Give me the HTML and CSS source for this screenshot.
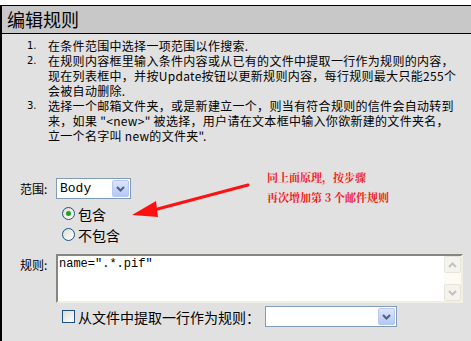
FILE: index.html
```html
<!DOCTYPE html>
<html>
<head>
<meta charset="utf-8">
<link rel="stylesheet" href="styles.css">
</head>
<body>
<div class="panel">
  <div class="title">编辑规则</div>
  <div class="content">
    <ol class="steps">
      <li><span class="num">1.</span><span class="txt">在条件范围中选择一项范围以作搜索.</span></li>
      <li><span class="num">2.</span><span class="txt">在规则内容框里输入条件内容或从已有的文件中提取一行作为规则的内容，<br>现在列表框中，并按Update按钮以更新规则内容，每行规则最大只能255个<br>会被自动删除.</span></li>
      <li><span class="num">3.</span><span class="txt">选择一个邮箱文件夹，或是新建立一个，则当有符合规则的信件会自动转到<br>来，如果 "&lt;new&gt;" 被选择，用户请在文本框中输入你欲新建的文件夹名，<br>立一个名字叫 new的文件夹".</span></li>
    </ol>
    <div class="row range">
      <span class="label">范围:</span>
      <div class="select small"><span class="val">Body</span><span class="btn"><svg width="9" height="6" viewBox="0 0 9 6"><path d="M1 1 L4.5 4.5 L8 1" fill="none" stroke="#4d6185" stroke-width="2"/></svg></span></div>
    </div>
    <div class="radios">
      <label class="radio"><span class="dot on"></span>包含</label>
      <label class="radio"><span class="dot"></span>不包含</label>
    </div>
    <div class="row rule">
      <span class="label">规则:</span>
      <div class="textarea">
        <span class="code">name=".*.pif"</span>
        <div class="scroll">
          <span class="sbtn"><svg width="9" height="6" viewBox="0 0 9 6"><path d="M1 5 L4.5 1.5 L8 5" fill="none" stroke="#c3c3bd" stroke-width="2"/></svg></span>
          <span class="sbtn"><svg width="9" height="6" viewBox="0 0 9 6"><path d="M1 1 L4.5 4.5 L8 1" fill="none" stroke="#c3c3bd" stroke-width="2"/></svg></span>
        </div>
      </div>
    </div>
    <div class="row extract">
      <span class="check"></span>
      <span class="ctext">从文件中提取一行作为规则：</span>
      <div class="select wide"><span class="val"></span><span class="btn"><svg width="9" height="6" viewBox="0 0 9 6"><path d="M1 1 L4.5 4.5 L8 1" fill="none" stroke="#4d6185" stroke-width="2"/></svg></span></div>
    </div>
  </div>
  <div class="note">
    <div>同上面原理，按步骤</div>
    <div>再次增加第 3 个邮件规则</div>
  </div>
  <svg class="arrow" width="130" height="40" viewBox="0 0 130 40">
    <path d="M118 4 L20 30" stroke="#ff1010" stroke-width="3" stroke-linecap="round"/>
    <path d="M2 34 L26 20 L28 36 Z" fill="#ff1010"/>
  </svg>
</div>
</body>
</html>
```
FILE: styles.css
```css
html, body {
  margin: 0;
  padding: 0;
  background: #ffffff;
  overflow: hidden;
}
body {
  width: 471px;
  height: 341px;
  padding-top: 5px;
  box-sizing: border-box;
  font-family: "Noto Sans CJK SC", "DejaVu Sans", sans-serif;
  color: #000;
}
.panel {
  position: relative;
  width: 700px;
  height: 336px;
  border-top: 1px solid #000;
  border-left: 2px solid #000;
  background: #e1e1e1;
}
.title {
  height: 27px;
  background: #c8c8c8;
  border-bottom: 1px solid #000;
  font-size: 18px;
  line-height: 27px;
  padding-left: 5px;
  color: #000;
}
.content {
  padding-top: 4px;
}
.steps {
  list-style: none;
  margin: 0;
  padding: 0;
  font-size: 12px;
  line-height: 15px;
  white-space: nowrap;
}
.steps li {
  display: flex;
}
.num {
  width: 21px;
  padding-left: 25px;
  font-size: 10px;
  font-family: "DejaVu Sans", sans-serif;
}
.txt {
  display: block;
  letter-spacing: 0.3px;
}
.row {
  display: flex;
  align-items: center;
}
.label {
  width: 36px;
  padding-left: 18px;
  font-size: 12px;
}
.range {
  margin-top: 35px;
  height: 21px;
}
.select {
  display: flex;
  height: 21px;
  box-sizing: border-box;
  border: 1px solid #7f9db9;
  background: #fff;
}
.select.small { width: 75px; }
.select.wide { width: 132px; margin-left: 5px; }
.select .val {
  flex: 1;
  font-family: "Liberation Mono", monospace;
  font-size: 13px;
  line-height: 19px;
  padding-left: 3px;
}
.select .btn {
  width: 15px;
  margin: 1px;
  border: 1px solid #b7c9f0;
  border-radius: 2px;
  background: linear-gradient(#dbe5fb, #b5c8f5);
  display: flex;
  align-items: center;
  justify-content: center;
}
.radios {
  padding-left: 60px;
  padding-top: 4px;
  font-size: 14px;
  line-height: 20px;
}
.radio {
  display: flex;
  align-items: center;
  height: 21px;
}
.dot {
  width: 11px;
  height: 11px;
  border: 1px solid #1c5180;
  border-radius: 50%;
  background: linear-gradient(135deg, #dcdcd5, #fff);
  margin-right: 3px;
  position: relative;
}
.dot.on::after {
  content: "";
  position: absolute;
  left: 3px;
  top: 3px;
  width: 5px;
  height: 5px;
  border-radius: 50%;
  background: #21a121;
}
.rule {
  margin-top: 9px;
  align-items: flex-start;
}
.rule .label { padding-top: 2px; }
.textarea {
  width: 407px;
  height: 49px;
  box-sizing: border-box;
  background: #fff;
  border-top: 2px solid #868680;
  border-left: 2px solid #868680;
  border-right: 2px solid #f1efe2;
  border-bottom: 2px solid #f1efe2;
  display: flex;
  justify-content: space-between;
}
.code {
  font-family: "Liberation Mono", monospace;
  font-size: 12px;
  line-height: 14px;
  padding-left: 1px;
  padding-top: 1px;
}
.scroll {
  width: 17px;
  background: #fcfcf4;
  display: flex;
  flex-direction: column;
  justify-content: space-between;
}
.sbtn {
  height: 15px;
  border: 1px solid #e6e5dc;
  border-radius: 2px;
  background: #f4f3ee;
  display: flex;
  align-items: center;
  justify-content: center;
}
.extract {
  margin-top: 3px;
  height: 21px;
}
.check {
  width: 11px;
  height: 11px;
  border: 1px solid #1c5180;
  background: linear-gradient(135deg, #dcdcd5, #fff);
  margin-left: 60px;
  margin-right: 3px;
}
.ctext {
  font-size: 14px;
}
.note {
  position: absolute;
  left: 265px;
  top: 161px;
  color: #ee2222;
  font-family: "Noto Serif CJK SC", "Noto Sans CJK SC", serif;
  font-size: 11px;
  line-height: 20px;
  font-weight: bold;
}
.arrow {
  position: absolute;
  left: 128px;
  top: 175px;
}
```
